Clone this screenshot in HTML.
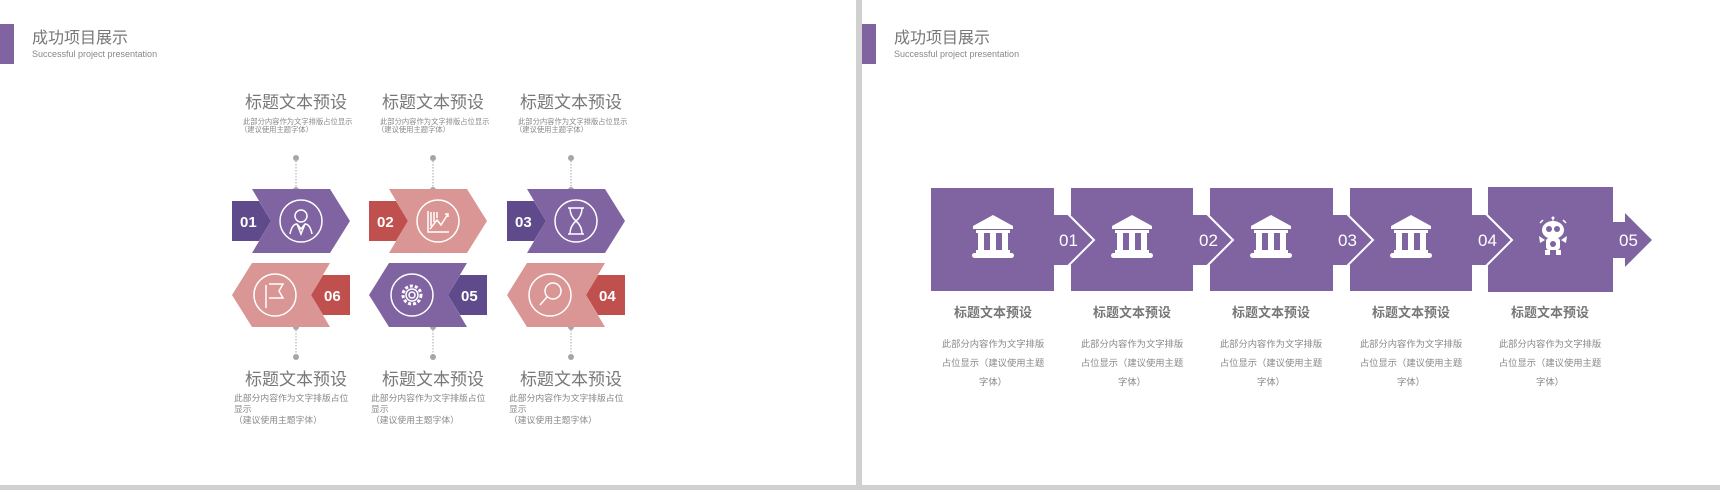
<!DOCTYPE html>
<html><head><meta charset="utf-8"><style>
html,body{margin:0;padding:0;background:#fff;width:1720px;height:490px;overflow:hidden}
svg text{font-family:"Liberation Sans","Noto Sans CJK SC",sans-serif}
</style></head><body>
<svg width="1720" height="490" viewBox="0 0 1720 490" xmlns="http://www.w3.org/2000/svg">
<defs>
<g id="bank" fill="#fff">
<path d="M-20,-12 L0,-23 L20,-12 L20,-9 L-20,-9 Z"/>
<rect x="-17" y="-8" width="34" height="3"/>
<rect x="-15" y="-5" width="6" height="17"/>
<rect x="-3" y="-5" width="6" height="17"/>
<rect x="9" y="-5" width="6" height="17"/>
<rect x="-17" y="12" width="34" height="3"/>
<rect x="-21" y="15" width="42" height="5" rx="2.5"/>
</g>
<g id="conn">
<rect x="0" y="-25" width="18" height="50" fill="#8064a2"/>
<path d="M14,-26 L40,0 L14,26" fill="#8064a2" stroke="#fff" stroke-width="2"/>
</g>
</defs>
<rect x="0" y="0" width="1720" height="490" fill="#fff"/>
<rect x="856" y="0" width="6" height="490" fill="#d0d0d0"/>
<rect x="0" y="485" width="1720" height="5" fill="#d0d0d0"/>
<!-- headers -->
<rect x="0" y="24" width="14" height="40" fill="#8064a2"/>
<text x="32" y="43" font-size="16" fill="#777">成功项目展示</text>
<text x="32" y="57" font-size="9" fill="#888">Successful project presentation</text>
<rect x="862" y="24" width="14" height="40" fill="#8064a2"/>
<text x="894" y="43" font-size="16" fill="#777">成功项目展示</text>
<text x="894" y="57" font-size="9" fill="#888">Successful project presentation</text>

<!-- LEFT SLIDE -->
<g id="colA">
<text x="296" y="108" font-size="17" fill="#777" text-anchor="middle">标题文本预设</text>
<text x="243" y="124" font-size="7.3" fill="#888">此部分内容作为文字排版占位显示</text>
<text x="240" y="132" font-size="7.3" fill="#888">（建议使用主题字体）</text>
<circle cx="296" cy="158" r="3" fill="#a6a6a6"/>
<line x1="296" y1="158" x2="296" y2="190" stroke="#a6a6a6" stroke-dasharray="1.5,1.5"/>
<circle cx="296" cy="190" r="3" fill="#a6a6a6"/>
<circle cx="296" cy="327" r="3" fill="#a6a6a6"/>
<line x1="296" y1="327" x2="296" y2="357" stroke="#a6a6a6" stroke-dasharray="1.5,1.5"/>
<circle cx="296" cy="357" r="3" fill="#a6a6a6"/>
<text x="296" y="385" font-size="17" fill="#777" text-anchor="middle">标题文本预设</text>
<text x="234" y="401" font-size="8.8" fill="#888">此部分内容作为文字排版占位</text>
<text x="234" y="412" font-size="8.8" fill="#888">显示</text>
<text x="234" y="423" font-size="8.8" fill="#888">（建议使用主题字体）</text>
</g>
<use href="#colA" x="137"/>
<use href="#colA" x="275"/>

<!-- row1 -->
<g>
<polygon points="232,201 259,201 271,221 259,241 232,241" fill="#5f4b8b"/>
<polygon points="252,189 330,189 350,221 330,253 252,253 271,221" fill="#8064a2"/>
<text x="240" y="227" font-size="15" font-weight="bold" fill="#fff">01</text>
</g>
<g transform="translate(137,0)">
<polygon points="232,201 259,201 271,221 259,241 232,241" fill="#c0504d"/>
<polygon points="252,189 330,189 350,221 330,253 252,253 271,221" fill="#d99694"/>
<text x="240" y="227" font-size="15" font-weight="bold" fill="#fff">02</text>
</g>
<g transform="translate(275,0)">
<polygon points="232,201 259,201 271,221 259,241 232,241" fill="#5f4b8b"/>
<polygon points="252,189 330,189 350,221 330,253 252,253 271,221" fill="#8064a2"/>
<text x="240" y="227" font-size="15" font-weight="bold" fill="#fff">03</text>
</g>
<!-- row2 -->
<g>
<polygon points="350,275 323,275 311,295 323,315 350,315" fill="#c0504d"/>
<polygon points="330,263 252,263 232,295 252,327 330,327 311,295" fill="#d99694"/>
<text x="324" y="301" font-size="15" font-weight="bold" fill="#fff">06</text>
</g>
<g transform="translate(137,0)">
<polygon points="350,275 323,275 311,295 323,315 350,315" fill="#5f4b8b"/>
<polygon points="330,263 252,263 232,295 252,327 330,327 311,295" fill="#8064a2"/>
<text x="324" y="301" font-size="15" font-weight="bold" fill="#fff">05</text>
</g>
<g transform="translate(275,0)">
<polygon points="350,275 323,275 311,295 323,315 350,315" fill="#c0504d"/>
<polygon points="330,263 252,263 232,295 252,327 330,327 311,295" fill="#d99694"/>
<text x="324" y="301" font-size="15" font-weight="bold" fill="#fff">04</text>
</g>
<!-- icon circles -->
<g fill="none" stroke="#fff" stroke-width="1.5">
<circle cx="301" cy="221" r="21"/>
<circle cx="301" cy="216" r="6"/>
<path d="M290,234 Q292,224 297,224 L301,229 L305,224 Q310,224 312,234 M297,224 L301,234 L305,224"/>
<circle cx="438" cy="221" r="21"/>
<path d="M428,211 L428,232 L449,232 M430,229 L437,220 L441,225 L448,214 M445,214 L448,214 L448,217 M431,212 V226 M434,212 V222 M437,212 V218"/>
<circle cx="576" cy="221" r="21"/>
<path d="M568,208 H584 M568,234 H584 M570,208 Q570,216 576,221 Q570,226 570,234 M582,208 Q582,216 576,221 Q582,226 582,234"/>
<circle cx="275" cy="295" r="21"/>
<path d="M266,285 V308 M269,284 L283,284 L279,291 L283,298 L269,298"/>
<circle cx="412" cy="295" r="21"/>
<circle cx="412" cy="295" r="9" stroke-dasharray="3,2" stroke-width="3"/>
<circle cx="412" cy="295" r="6"/>
<circle cx="412" cy="295" r="3"/>
<circle cx="550" cy="295" r="21"/>
<circle cx="553" cy="291" r="8"/>
<path d="M547,297 L540,305"/>
</g>

<!-- RIGHT SLIDE -->
<g fill="#8064a2">
<rect x="931" y="188" width="123" height="103"/>
<rect x="1071" y="188" width="122" height="103"/>
<rect x="1210" y="188" width="123" height="103"/>
<rect x="1350" y="188" width="122" height="103"/>
<rect x="1488" y="187" width="125" height="105"/>
</g>
<use href="#conn" x="1054" y="240"/>
<use href="#conn" x="1193" y="240"/>
<use href="#conn" x="1333" y="240"/>
<use href="#conn" x="1472" y="240"/>
<polygon points="1612,222 1625,222 1625,213 1652,240 1625,267 1625,258 1612,258" fill="#8064a2"/>
<g font-size="17" fill="#fff">
<text x="1059" y="246">01</text>
<text x="1199" y="246">02</text>
<text x="1338" y="246">03</text>
<text x="1478" y="246">04</text>
<text x="1619" y="246">05</text>
</g>
<use href="#bank" x="993" y="238"/>
<use href="#bank" x="1132" y="238"/>
<use href="#bank" x="1271" y="238"/>
<use href="#bank" x="1411" y="238"/>
<!-- robot -->
<g fill="#fff">
<circle cx="1553" cy="218" r="1.5"/>
<rect x="1552.5" y="218" width="1" height="4"/>
<ellipse cx="1553" cy="230" rx="11" ry="9"/>
<circle cx="1549" cy="229" r="3" fill="#8064a2"/>
<circle cx="1557" cy="229" r="3" fill="#8064a2"/>
<rect x="1546" y="238" width="14" height="12" rx="3"/>
<circle cx="1553" cy="244" r="3" fill="#8064a2"/>
<path d="M1545,240 L1539,236 L1540,243 Z M1561,240 L1567,236 L1566,243 Z"/>
<rect x="1545" y="250" width="5" height="5"/>
<rect x="1556" y="250" width="5" height="5"/>
<path d="M1540,223 L1543,220 M1566,223 L1563,220" stroke="#fff" stroke-width="1.5"/>
</g>
<g fill="#777" font-size="13" font-weight="bold" text-anchor="middle">
<text x="993" y="317">标题文本预设</text>
<text x="1132" y="317">标题文本预设</text>
<text x="1271" y="317">标题文本预设</text>
<text x="1411" y="317">标题文本预设</text>
<text x="1550" y="317">标题文本预设</text>
</g>
<g id="rt" fill="#888" font-size="9.3" text-anchor="middle">
<text x="993" y="347">此部分内容作为文字排版</text>
<text x="993" y="366">占位显示（建议使用主题</text>
<text x="993" y="385">字体）</text>
</g>
<use href="#rt" x="139"/>
<use href="#rt" x="278"/>
<use href="#rt" x="418"/>
<use href="#rt" x="557"/>
</svg>
</body></html>
